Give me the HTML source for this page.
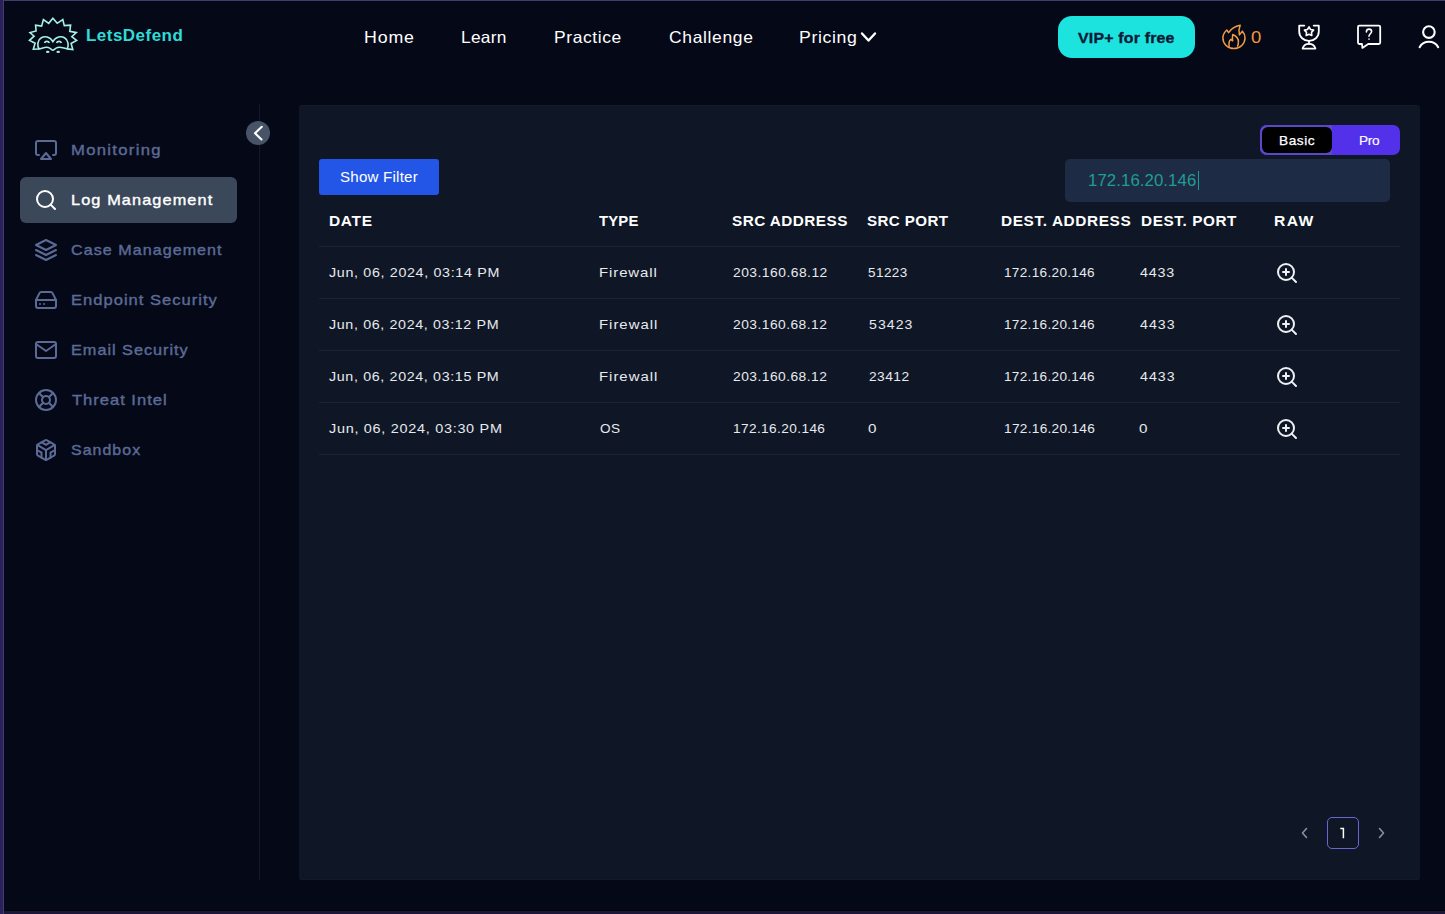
<!DOCTYPE html>
<html><head><meta charset="utf-8"><title>LetsDefend</title><style>
*{box-sizing:border-box;margin:0;padding:0}
html,body{width:1445px;height:914px;overflow:hidden;background:#050817;font-family:"Liberation Sans",sans-serif}
.a{position:absolute}
.t{position:absolute;white-space:nowrap;line-height:1}
svg{position:absolute;overflow:visible}
.ln{position:absolute;left:319px;width:1081px;height:1px;background:#1b2434}
</style></head><body>
<div class="a" style="left:0;top:0;width:1445px;height:1px;background:#433c70"></div>
<div class="a" style="left:0;top:910px;width:1445px;height:1px;background:#03040c"></div>
<div class="a" style="left:0;top:911px;width:1445px;height:3px;background:#1c1739"></div>
<div class="a" style="left:0;top:0;width:3px;height:914px;background:#2a2158"></div>
<div class="a" style="left:3px;top:0;width:1px;height:914px;background:#433a76"></div>
<div class="a" style="left:259px;top:104px;width:1px;height:776px;background:#141a29"></div>
<div class="a" style="left:20px;top:177px;width:217px;height:46px;border-radius:6px;background:#3a4859"></div>
<div class="a" style="left:246px;top:121px;width:24px;height:24px;border-radius:50%;background:#475467"></div>
<svg style="left:246px;top:121px" width="24" height="24" viewBox="0 0 24 24"><path d="M15.8 5.8 L9 12.2 L15.5 18.5" fill="none" stroke="#fff" stroke-width="2.1" stroke-linecap="round" stroke-linejoin="round"/></svg>
<svg style="left:34px;top:138px" width="24" height="24" viewBox="0 0 24 24" fill="none" stroke="#5b6b96" stroke-width="2" stroke-linecap="round" stroke-linejoin="round"><path d="M5 17H4a2 2 0 0 1-2-2V5a2 2 0 0 1 2-2h16a2 2 0 0 1 2 2v10a2 2 0 0 1-2 2h-1"/><polygon points="12 15 17 21 7 21 12 15"/></svg>
<svg style="left:34px;top:188px" width="24" height="24" viewBox="0 0 24 24" fill="none" stroke="#ffffff" stroke-width="2" stroke-linecap="round" stroke-linejoin="round"><circle cx="11" cy="11" r="8"/><line x1="21" y1="21" x2="16.65" y2="16.65"/></svg>
<svg style="left:34px;top:238.4px" width="24" height="24" viewBox="0 0 24 24" fill="none" stroke="#5b6b96" stroke-width="2" stroke-linecap="round" stroke-linejoin="round"><polygon points="12 2 2 7 12 12 22 7 12 2"/><polyline points="2 17 12 22 22 17"/><polyline points="2 12 12 17 22 12"/></svg>
<svg style="left:34px;top:288.3px" width="24" height="24" viewBox="0 0 24 24" fill="none" stroke="#5b6b96" stroke-width="2" stroke-linecap="round" stroke-linejoin="round"><line x1="22" y1="12" x2="2" y2="12"/><path d="M5.45 5.11L2 12v6a2 2 0 0 0 2 2h16a2 2 0 0 0 2-2v-6l-3.45-6.89A2 2 0 0 0 16.76 4H7.24a2 2 0 0 0-1.79 1.11z"/><line x1="6" y1="16" x2="6.01" y2="16"/><line x1="10" y1="16" x2="10.01" y2="16"/></svg>
<svg style="left:34px;top:338px" width="24" height="24" viewBox="0 0 24 24" fill="none" stroke="#5b6b96" stroke-width="2" stroke-linecap="round" stroke-linejoin="round"><path d="M4 4h16c1.1 0 2 .9 2 2v12c0 1.1-.9 2-2 2H4c-1.1 0-2-.9-2-2V6c0-1.1.9-2 2-2z"/><polyline points="22,6 12,13 2,6"/></svg>
<svg style="left:34px;top:388px" width="24" height="24" viewBox="0 0 24 24" fill="none" stroke="#5b6b96" stroke-width="2" stroke-linecap="round" stroke-linejoin="round"><circle cx="12" cy="12" r="10"/><circle cx="12" cy="12" r="4"/><line x1="4.93" y1="4.93" x2="9.17" y2="9.17"/><line x1="14.83" y1="14.83" x2="19.07" y2="19.07"/><line x1="14.83" y1="9.17" x2="19.07" y2="4.93"/><line x1="4.93" y1="19.07" x2="9.17" y2="14.83"/></svg>
<svg style="left:34px;top:438.4px" width="24" height="24" viewBox="0 0 24 24" fill="none" stroke="#5b6b96" stroke-width="2" stroke-linecap="round" stroke-linejoin="round"><path d="M21 16V8a2 2 0 0 0-1-1.73l-7-4a2 2 0 0 0-2 0l-7 4A2 2 0 0 0 3 8v8a2 2 0 0 0 1 1.73l7 4a2 2 0 0 0 2 0l7-4A2 2 0 0 0 21 16z"/><polyline points="7.5 4.21 12 6.81 16.5 4.21"/><polyline points="7.5 19.79 7.5 14.6 3 12"/><polyline points="21 12 16.5 14.6 16.5 19.79"/><polyline points="3.27 6.96 12 12.01 20.73 6.96"/><line x1="12" y1="22.08" x2="12" y2="12"/></svg>
<svg style="left:24px;top:12px" width="60" height="46" viewBox="0 0 60 46" fill="none" stroke="#a6f4e4" stroke-width="1.6" stroke-linejoin="miter">
<path d="M15.1 37 L9.3 37.2 L11.1 31.2 L5.5 28.4 L10.1 24.2 L6 20.6 L12.1 18.9 L11.6 13.3 L17.6 14.1 L19.4 7.5 L24.7 11.3 L28.9 6.3 L33.2 11.3 L38.8 7.5 L40.3 13.6 L46.6 13.1 L45.8 19.4 L52.3 20.6 L47.8 24.7 L52.6 28.4 L47.1 31.5 L48.8 37.5 L43.3 36.9"/>
<path d="M15.1 37 C13 34 13.3 28 17 26 C20.5 23.8 26 24.5 28.9 29.7 C31.8 24.5 37.3 23.8 40.8 26 C44.5 28 44.8 34 43.3 36.9 C40 36.5 37 34.5 33.7 35.4 C31 36.1 30 38.2 28.9 38.2 C27.8 38.2 26.8 36.1 24.2 35.4 C21 34.5 18 36.5 15.1 37 Z"/>
<path d="M20.5 31 A2.5 2.3 0 0 1 25.3 31 M32.6 31 A2.5 2.3 0 0 1 37.4 31"/>
<ellipse cx="23.7" cy="39.9" rx="1.8" ry="1.1" fill="#a4f2e2" stroke="none"/>
<ellipse cx="34.2" cy="39.9" rx="1.8" ry="1.1" fill="#a4f2e2" stroke="none"/>
</svg>
<svg style="left:860px;top:31px" width="18" height="13" viewBox="0 0 18 13"><path d="M2 2.5 L8.5 9.5 L15 2.5" fill="none" stroke="#fff" stroke-width="2.4" stroke-linecap="round" stroke-linejoin="round"/></svg>
<div class="a" style="left:1058px;top:16px;width:137px;height:42px;border-radius:14px;background:#1de3df"></div>
<svg style="left:1216px;top:20px" width="50" height="34" viewBox="0 0 50 34" fill="none" stroke="#f39c44" stroke-width="1.5" stroke-linejoin="round" stroke-linecap="round">
<path d="M10.8 10 L12.6 12.6 C15.5 8 19.5 6 24.2 5.2 C22.8 8.5 22.6 12 23.4 14.9 L26.4 11.2 C28.1 13 29 15.3 29 17.9 C29 23.8 24.1 28.6 17.9 28.6 C11.8 28.6 6.9 23.8 6.9 17.9 C6.9 15 8.3 12.2 10.8 10 Z"/>
<path d="M13.2 26.2 C12.6 23.5 13.3 20.8 14.9 19.3 L16.7 20.8 C16.3 18.5 16.4 16.3 16.7 14.5 C20.3 16 22.6 18.8 22.4 22.2 C22.3 24 22 25.2 21.6 26.1"/>
</svg>
<svg style="left:1290px;top:18px" width="40" height="38" viewBox="0 0 40 38" fill="none" stroke="#fff" stroke-width="1.8" stroke-linejoin="round" stroke-linecap="round">
<path d="M14.3 7.6 H9.2 V13.6 C9.2 18.9 13.6 22.9 19 22.9 C24.4 22.9 28.8 18.9 28.8 13.6 V7.6 H23.7"/>
<path d="M19 23 V25.9"/>
<path d="M12.6 30.6 C13.4 27.8 16 25.9 19 25.9 C22 25.9 24.6 27.8 25.4 30.6 Z"/>
<path d="M19.00 8.80 L20.53 11.50 L23.57 12.12 L21.47 14.40 L21.82 17.48 L19.00 16.20 L16.18 17.48 L16.53 14.40 L14.43 12.12 L17.47 11.50 Z" stroke-width="1.6"/>
</svg>
<svg style="left:1350px;top:18px" width="40" height="38" viewBox="0 0 40 38" fill="none" stroke="#fff" stroke-width="1.8" stroke-linejoin="round" stroke-linecap="round">
<path d="M9.4 7.6 H28.8 Q30.2 7.6 30.2 9 V24.6 Q30.2 26 28.8 26 H18.2 L12.4 29.9 L12 26 H9.4 Q8 26 8 24.6 V9 Q8 7.6 9.4 7.6 Z"/>
<path d="M16.4 13.9 C16.4 12.1 17.5 11.1 19 11.1 C20.5 11.1 21.6 12.1 21.6 13.6 C21.6 15.6 19 15.9 19 18.2" stroke-width="1.6"/>
<circle cx="19" cy="21.1" r="0.9" fill="#ddd" stroke="none"/>
</svg>
<svg style="left:1405px;top:18px" width="40" height="38" viewBox="0 0 40 38" fill="none" stroke="#fff" stroke-width="2.1" stroke-linecap="round">
<circle cx="23.9" cy="14.1" r="5.8"/>
<path d="M14.6 29.2 C16.6 25.6 20 23.8 23.9 23.8 C27.8 23.8 31.2 25.6 33.2 29.2"/>
</svg>
<div class="a" style="left:299px;top:105px;width:1121px;height:775px;border-radius:3px;background:#0f1726;box-shadow:inset 0 1px 0 #141a28, inset 0 -1px 0 #141a28"></div>
<div class="a" style="left:319px;top:159px;width:120px;height:36px;border-radius:3px;background:#2356e6"></div>
<div class="a" style="left:1260px;top:125px;width:140px;height:30px;border-radius:7px;background:#5331ea"></div>
<div class="a" style="left:1260px;top:125px;width:72px;height:30px;border-radius:7px 0 0 7px;background:#5a47c9"></div>
<div class="a" style="left:1262px;top:127px;width:70px;height:26px;border-radius:6px;background:#000"></div>
<div class="a" style="left:1065px;top:159px;width:325px;height:43px;border-radius:5px;background:#1e2b45"></div>
<div class="a" style="left:1198px;top:171px;width:1px;height:19px;background:#1f9d93"></div>
<div class="ln" style="top:246px"></div>
<div class="ln" style="top:298px"></div>
<div class="ln" style="top:350px"></div>
<div class="ln" style="top:402px"></div>
<div class="ln" style="top:454px"></div>
<svg style="left:1274.9px;top:260.8px" width="24" height="24" viewBox="0 0 24 24" fill="none" stroke="#eef0f4" stroke-width="2" stroke-linecap="round" stroke-linejoin="round"><circle cx="11" cy="11" r="8"/><line x1="21" y1="21" x2="16.65" y2="16.65"/><line x1="11" y1="8" x2="11" y2="14"/><line x1="8" y1="11" x2="14" y2="11"/></svg>
<svg style="left:1274.9px;top:312.8px" width="24" height="24" viewBox="0 0 24 24" fill="none" stroke="#eef0f4" stroke-width="2" stroke-linecap="round" stroke-linejoin="round"><circle cx="11" cy="11" r="8"/><line x1="21" y1="21" x2="16.65" y2="16.65"/><line x1="11" y1="8" x2="11" y2="14"/><line x1="8" y1="11" x2="14" y2="11"/></svg>
<svg style="left:1274.9px;top:364.8px" width="24" height="24" viewBox="0 0 24 24" fill="none" stroke="#eef0f4" stroke-width="2" stroke-linecap="round" stroke-linejoin="round"><circle cx="11" cy="11" r="8"/><line x1="21" y1="21" x2="16.65" y2="16.65"/><line x1="11" y1="8" x2="11" y2="14"/><line x1="8" y1="11" x2="14" y2="11"/></svg>
<svg style="left:1274.9px;top:416.8px" width="24" height="24" viewBox="0 0 24 24" fill="none" stroke="#eef0f4" stroke-width="2" stroke-linecap="round" stroke-linejoin="round"><circle cx="11" cy="11" r="8"/><line x1="21" y1="21" x2="16.65" y2="16.65"/><line x1="11" y1="8" x2="11" y2="14"/><line x1="8" y1="11" x2="14" y2="11"/></svg>
<div class="a" style="left:1327px;top:817px;width:32px;height:32px;border-radius:5px;border:1px solid #6567d2"></div>
<svg style="left:1296px;top:823px" width="18" height="20" viewBox="0 0 18 20"><path d="M10.5 5.5 L6.5 10 L10.5 14.5" fill="none" stroke="#8a909c" stroke-width="1.6" stroke-linecap="round" stroke-linejoin="round"/></svg>
<svg style="left:1372px;top:823px" width="18" height="20" viewBox="0 0 18 20"><path d="M7.5 5.5 L11.5 10 L7.5 14.5" fill="none" stroke="#8a909c" stroke-width="1.6" stroke-linecap="round" stroke-linejoin="round"/></svg>
<div class="t" style="left:86.3px;top:26.9px;font-size:16.2px;font-weight:bold;color:#2fdcd5;letter-spacing:0.456px;transform:scaleX(1.05);transform-origin:0 0;">LetsDefend</div>
<div class="t" style="left:363.9px;top:29.1px;font-size:16.5px;font-weight:normal;color:#ffffff;letter-spacing:0.774px;transform:scaleX(1.077);transform-origin:0 0;">Home</div>
<div class="t" style="left:461.1px;top:29.1px;font-size:16.5px;font-weight:normal;color:#ffffff;letter-spacing:0.262px;transform:scaleX(1.05);transform-origin:0 0;">Learn</div>
<div class="t" style="left:554.2px;top:29.1px;font-size:16.5px;font-weight:normal;color:#ffffff;letter-spacing:0.58px;transform:scaleX(1.056);transform-origin:0 0;">Practice</div>
<div class="t" style="left:668.9px;top:29.1px;font-size:16.5px;font-weight:normal;color:#ffffff;letter-spacing:0.613px;transform:scaleX(1.059);transform-origin:0 0;">Challenge</div>
<div class="t" style="left:799.1px;top:29.1px;font-size:16.5px;font-weight:normal;color:#ffffff;letter-spacing:0.56px;transform:scaleX(1.073);transform-origin:0 0;">Pricing</div>
<div class="t" style="left:1078.2px;top:29.6px;font-size:15.4px;font-weight:bold;color:#0b1a36;letter-spacing:0.194px;transform:scaleX(1.032);transform-origin:0 0;-webkit-text-stroke:0.35px #0b1a36;">VIP+ for free</div>
<div class="t" style="left:1250.5px;top:28.875px;font-size:16.5px;font-weight:normal;color:#f2953d;transform:scaleX(1.12);transform-origin:0 0;">0</div>
<div class="t" style="left:71.1px;top:142.8px;font-size:14.5px;font-weight:normal;color:#5b6b96;letter-spacing:1.122px;transform:scaleX(1.15);transform-origin:0 0;-webkit-text-stroke:0.38px #5b6b96;">Monitoring</div>
<div class="t" style="left:71.2px;top:192.6px;font-size:14.5px;font-weight:normal;color:#ffffff;letter-spacing:0.976px;transform:scaleX(1.125);transform-origin:0 0;-webkit-text-stroke:0.38px #ffffff;">Log Management</div>
<div class="t" style="left:71.1px;top:242.7px;font-size:14.5px;font-weight:normal;color:#5b6b96;letter-spacing:0.944px;transform:scaleX(1.109);transform-origin:0 0;-webkit-text-stroke:0.38px #5b6b96;">Case Management</div>
<div class="t" style="left:71.1px;top:292.6px;font-size:14.5px;font-weight:normal;color:#5b6b96;letter-spacing:0.884px;transform:scaleX(1.141);transform-origin:0 0;-webkit-text-stroke:0.38px #5b6b96;">Endpoint Security</div>
<div class="t" style="left:71.1px;top:342.7px;font-size:14.5px;font-weight:normal;color:#5b6b96;letter-spacing:0.852px;transform:scaleX(1.125);transform-origin:0 0;-webkit-text-stroke:0.38px #5b6b96;">Email Security</div>
<div class="t" style="left:72.1px;top:392.7px;font-size:14.5px;font-weight:normal;color:#5b6b96;letter-spacing:0.843px;transform:scaleX(1.145);transform-origin:0 0;-webkit-text-stroke:0.38px #5b6b96;">Threat Intel</div>
<div class="t" style="left:71.1px;top:442.9px;font-size:14.5px;font-weight:normal;color:#5b6b96;letter-spacing:0.942px;transform:scaleX(1.099);transform-origin:0 0;-webkit-text-stroke:0.38px #5b6b96;">Sandbox</div>
<div class="t" style="left:339.5px;top:169.7px;font-size:14.5px;font-weight:normal;color:#ffffff;letter-spacing:0.219px;transform:scaleX(1.041);transform-origin:0 0;">Show Filter</div>
<div class="t" style="left:1278.7px;top:133.5px;font-size:13px;font-weight:normal;color:#ffffff;letter-spacing:0.542px;transform:scaleX(1.051);transform-origin:0 0;-webkit-text-stroke:0.25px #fff;">Basic</div>
<div class="t" style="left:1359.3px;top:133.5px;font-size:13px;font-weight:normal;color:#ffffff;letter-spacing:-0.244px;transform:scaleX(1.047);transform-origin:0 0;-webkit-text-stroke:0.15px #fff;">Pro</div>
<div class="t" style="left:1088.4px;top:172.1px;font-size:16.5px;font-weight:normal;color:#1f9d93;letter-spacing:0.087px;transform:scaleX(1.016);transform-origin:0 0;">172.16.20.146</div>
<div class="t" style="left:328.8px;top:213.7px;font-size:14.5px;font-weight:bold;color:#ffffff;letter-spacing:0.645px;transform:scaleX(1.067);transform-origin:0 0;">DATE</div>
<div class="t" style="left:598.9px;top:213.7px;font-size:14.5px;font-weight:bold;color:#ffffff;letter-spacing:0.186px;transform:scaleX(1.025);transform-origin:0 0;">TYPE</div>
<div class="t" style="left:732.4px;top:213.7px;font-size:14.5px;font-weight:bold;color:#ffffff;letter-spacing:0.442px;transform:scaleX(1.054);transform-origin:0 0;">SRC ADDRESS</div>
<div class="t" style="left:867.3px;top:213.7px;font-size:14.5px;font-weight:bold;color:#ffffff;letter-spacing:0.39px;transform:scaleX(1.044);transform-origin:0 0;">SRC PORT</div>
<div class="t" style="left:1000.6px;top:213.7px;font-size:14.5px;font-weight:bold;color:#ffffff;letter-spacing:0.562px;transform:scaleX(1.061);transform-origin:0 0;">DEST. ADDRESS</div>
<div class="t" style="left:1140.6px;top:213.7px;font-size:14.5px;font-weight:bold;color:#ffffff;letter-spacing:0.565px;transform:scaleX(1.055);transform-origin:0 0;">DEST. PORT</div>
<div class="t" style="left:1274.2px;top:213.7px;font-size:14.5px;font-weight:bold;color:#ffffff;letter-spacing:1.325px;transform:scaleX(1.08);transform-origin:0 0;">RAW</div>
<div class="t" style="left:329.0px;top:266px;font-size:13px;font-weight:normal;color:#e8eaee;letter-spacing:0.605px;transform:scaleX(1.099);transform-origin:0 0;">Jun, 06, 2024, 03:14 PM</div>
<div class="t" style="left:599.0px;top:266px;font-size:13px;font-weight:normal;color:#e8eaee;letter-spacing:0.783px;transform:scaleX(1.15);transform-origin:0 0;">Firewall</div>
<div class="t" style="left:733.1px;top:266px;font-size:13px;font-weight:normal;color:#e8eaee;letter-spacing:0.457px;transform:scaleX(1.064);transform-origin:0 0;">203.160.68.12</div>
<div class="t" style="left:868.1px;top:266px;font-size:13px;font-weight:normal;color:#e8eaee;letter-spacing:0.434px;transform:scaleX(1.038);transform-origin:0 0;">51223</div>
<div class="t" style="left:1004.4px;top:266px;font-size:13px;font-weight:normal;color:#e8eaee;letter-spacing:0.312px;transform:scaleX(1.043);transform-origin:0 0;">172.16.20.146</div>
<div class="t" style="left:1140.0px;top:266px;font-size:13px;font-weight:normal;color:#e8eaee;letter-spacing:0.708px;transform:scaleX(1.1);transform-origin:0 0;">4433</div>
<div class="t" style="left:329.3px;top:318px;font-size:13px;font-weight:normal;color:#e8eaee;letter-spacing:0.581px;transform:scaleX(1.098);transform-origin:0 0;">Jun, 06, 2024, 03:12 PM</div>
<div class="t" style="left:599.0px;top:318px;font-size:13px;font-weight:normal;color:#e8eaee;letter-spacing:0.864px;transform:scaleX(1.147);transform-origin:0 0;">Firewall</div>
<div class="t" style="left:733.1px;top:318px;font-size:13px;font-weight:normal;color:#e8eaee;letter-spacing:0.44px;transform:scaleX(1.062);transform-origin:0 0;">203.160.68.12</div>
<div class="t" style="left:868.9px;top:318px;font-size:13px;font-weight:normal;color:#e8eaee;letter-spacing:0.968px;transform:scaleX(1.083);transform-origin:0 0;">53423</div>
<div class="t" style="left:1004.4px;top:318px;font-size:13px;font-weight:normal;color:#e8eaee;letter-spacing:0.312px;transform:scaleX(1.043);transform-origin:0 0;">172.16.20.146</div>
<div class="t" style="left:1140.0px;top:318px;font-size:13px;font-weight:normal;color:#e8eaee;letter-spacing:0.945px;transform:scaleX(1.091);transform-origin:0 0;">4433</div>
<div class="t" style="left:329.0px;top:370px;font-size:13px;font-weight:normal;color:#e8eaee;letter-spacing:0.586px;transform:scaleX(1.098);transform-origin:0 0;">Jun, 06, 2024, 03:15 PM</div>
<div class="t" style="left:599.0px;top:370px;font-size:13px;font-weight:normal;color:#e8eaee;letter-spacing:0.864px;transform:scaleX(1.147);transform-origin:0 0;">Firewall</div>
<div class="t" style="left:733.1px;top:370px;font-size:13px;font-weight:normal;color:#e8eaee;letter-spacing:0.44px;transform:scaleX(1.062);transform-origin:0 0;">203.160.68.12</div>
<div class="t" style="left:868.9px;top:370px;font-size:13px;font-weight:normal;color:#e8eaee;letter-spacing:0.417px;transform:scaleX(1.059);transform-origin:0 0;">23412</div>
<div class="t" style="left:1004.4px;top:370px;font-size:13px;font-weight:normal;color:#e8eaee;letter-spacing:0.312px;transform:scaleX(1.043);transform-origin:0 0;">172.16.20.146</div>
<div class="t" style="left:1140.0px;top:370px;font-size:13px;font-weight:normal;color:#e8eaee;letter-spacing:0.945px;transform:scaleX(1.091);transform-origin:0 0;">4433</div>
<div class="t" style="left:329.0px;top:422px;font-size:13px;font-weight:normal;color:#e8eaee;letter-spacing:0.649px;transform:scaleX(1.109);transform-origin:0 0;">Jun, 06, 2024, 03:30 PM</div>
<div class="t" style="left:599.9px;top:422px;font-size:13px;font-weight:normal;color:#e8eaee;letter-spacing:0.466px;transform:scaleX(1.047);transform-origin:0 0;">OS</div>
<div class="t" style="left:732.7px;top:422px;font-size:13px;font-weight:normal;color:#e8eaee;letter-spacing:0.389px;transform:scaleX(1.047);transform-origin:0 0;">172.16.20.146</div>
<div class="t" style="left:868.3px;top:422px;font-size:13px;font-weight:normal;color:#e8eaee;transform:scaleX(1.17);transform-origin:0 0;">0</div>
<div class="t" style="left:1004.0px;top:422px;font-size:13px;font-weight:normal;color:#e8eaee;letter-spacing:0.286px;transform:scaleX(1.049);transform-origin:0 0;">172.16.20.146</div>
<div class="t" style="left:1139.4px;top:422px;font-size:13px;font-weight:normal;color:#e8eaee;transform:scaleX(1.17);transform-origin:0 0;">0</div>
<svg style="left:1336px;top:824px" width="14" height="18" viewBox="0 0 14 18"><path d="M4.3 4.6 H7.4 V14.2" fill="none" stroke="#fff" stroke-width="1.5" stroke-linejoin="miter"/></svg>
</body></html>
